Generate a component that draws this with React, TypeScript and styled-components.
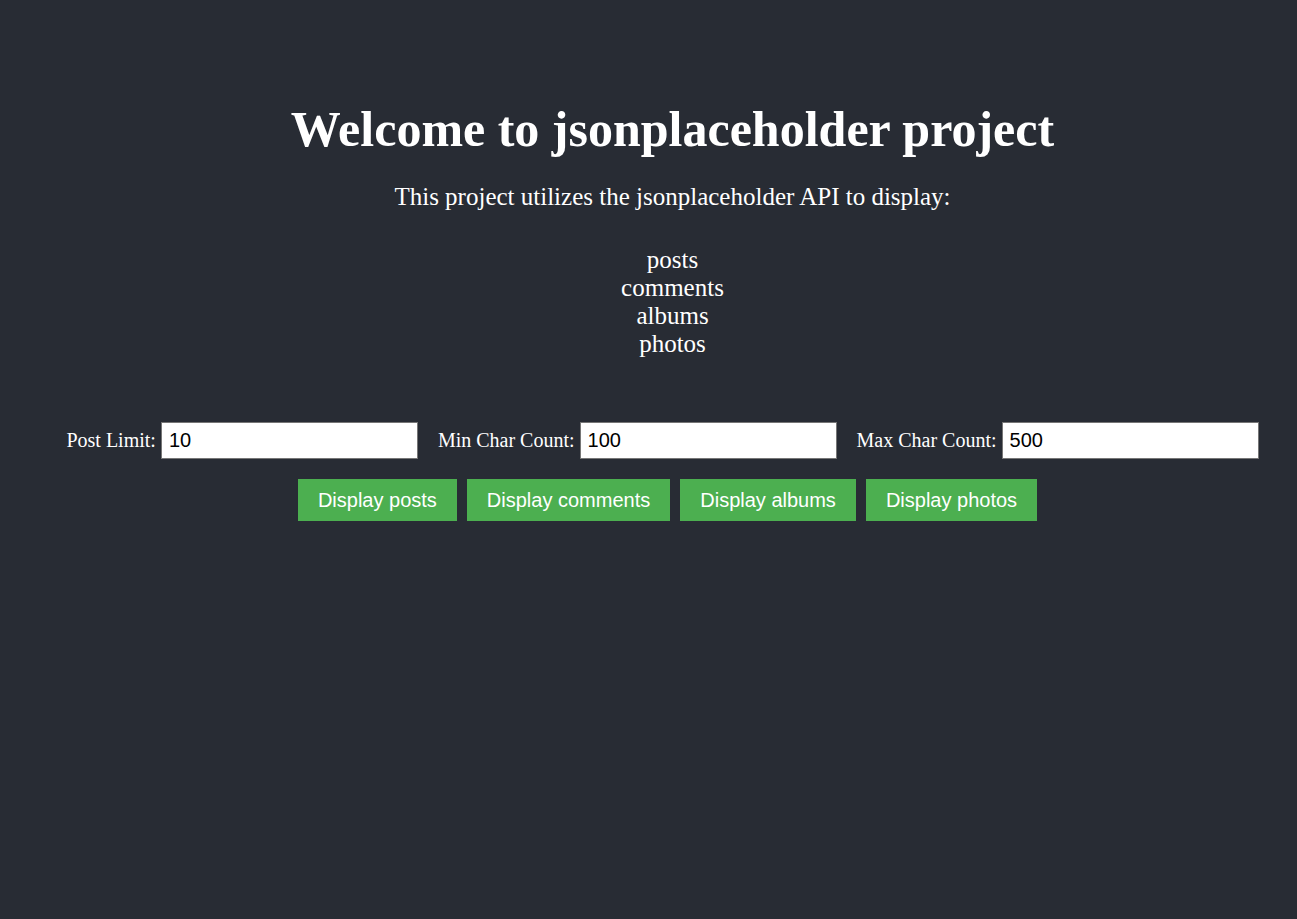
import React, { useState } from "react";
import styled, { createGlobalStyle } from "styled-components";

const GlobalStyle = createGlobalStyle`
  html, body {
    margin: 0;
    padding: 0;
    background-color: #282c34;
  }
`;

const Page = styled.div`
  min-height: 100vh;
  box-sizing: border-box;
  padding: 100px 0 0 48px;
  background-color: #282c34;
  color: #ffffff;
  text-align: center;
  font-family: "Liberation Serif", "Times New Roman", serif;
`;

const Title = styled.h1`
  margin: 0;
  font-size: 50px;
  font-weight: bold;
`;

const Intro = styled.p`
  margin: 25px 0 0;
  font-size: 25px;
`;

const TopicList = styled.ul`
  list-style: none;
  margin: 35px 0 0;
  padding: 0;
  font-size: 25px;
  line-height: 28px;
`;

const Controls = styled.div`
  display: flex;
  justify-content: center;
  align-items: center;
  margin-top: 64px;
`;

const Field = styled.label`
  display: flex;
  align-items: center;
  gap: 5px;
  margin-right: 20px;
  font-size: 20px;
`;

const NumberInput = styled.input`
  box-sizing: border-box;
  width: 257px;
  height: 37px;
  padding: 1px 7px;
  border: 1px solid #767676;
  background: #ffffff;
  color: #000000;
  font-family: "Liberation Sans", Arial, sans-serif;
  font-size: 20px;
  outline: none;
`;

const ButtonRow = styled.div`
  display: flex;
  justify-content: center;
  margin-top: 20px;
`;

const ActionButton = styled.button`
  margin-right: 10px;
  padding: 0 20px;
  height: 42px;
  border: none;
  background-color: #4caf50;
  color: #ffffff;
  font-family: "Liberation Sans", Arial, sans-serif;
  font-size: 20px;
  cursor: pointer;
`;

const topics = ["posts", "comments", "albums", "photos"];

export default function App() {
  const [postLimit, setPostLimit] = useState("10");
  const [minChars, setMinChars] = useState("100");
  const [maxChars, setMaxChars] = useState("500");

  return (
    <>
      <GlobalStyle />
      <Page>
        <Title>Welcome to jsonplaceholder project</Title>
        <Intro>This project utilizes the jsonplaceholder API to display:</Intro>
        <TopicList>
          {topics.map((t) => (
            <li key={t}>{t}</li>
          ))}
        </TopicList>

        <Controls>
          <Field>
            Post Limit:
            <NumberInput value={postLimit} onChange={(e) => setPostLimit(e.target.value)} />
          </Field>
          <Field>
            Min Char Count:
            <NumberInput value={minChars} onChange={(e) => setMinChars(e.target.value)} />
          </Field>
          <Field>
            Max Char Count:
            <NumberInput value={maxChars} onChange={(e) => setMaxChars(e.target.value)} />
          </Field>
        </Controls>

        <ButtonRow>
          {topics.map((t) => (
            <ActionButton key={t}>Display {t}</ActionButton>
          ))}
        </ButtonRow>
      </Page>
    </>
  );
}
